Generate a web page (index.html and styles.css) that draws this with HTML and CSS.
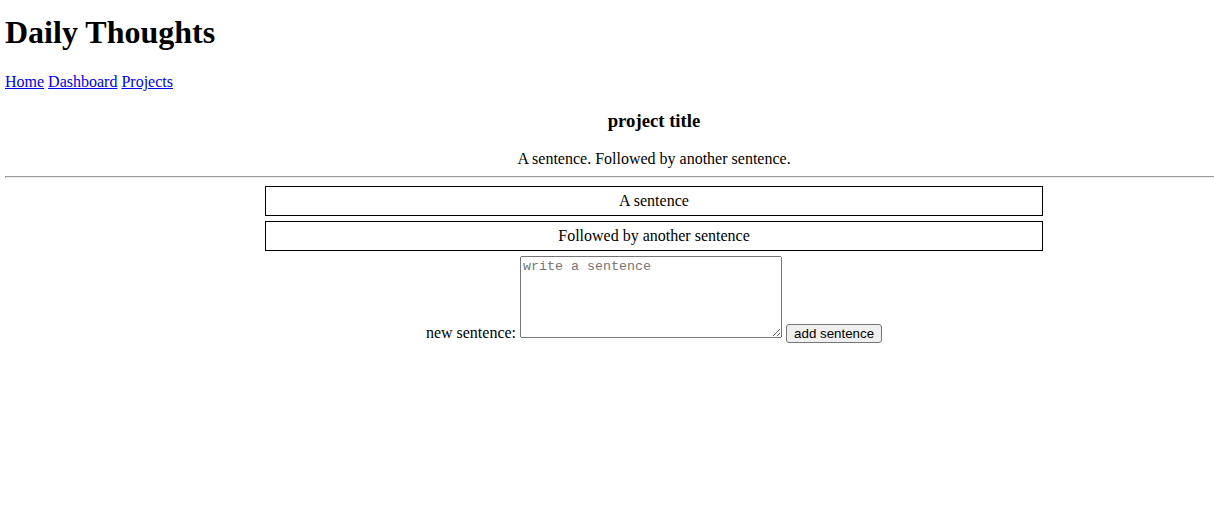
FILE: index.html
```html
<!DOCTYPE html>
<html>
<head>
<meta charset="utf-8">
<title>Daily Thoughts</title>
<link rel="stylesheet" href="styles.css">
</head>
<body>
<div class="page">
  <h1 class="site-title">Daily Thoughts</h1>
  <nav class="nav"><a href="#">Home</a> <a href="#">Dashboard</a> <a href="#">Projects</a></nav>
  <div class="project">
    <h3 class="project-title">project title</h3>
    <p class="project-text">A sentence. Followed by another sentence.</p>
    <hr class="divider">
    <div class="sentence">A sentence</div>
    <div class="sentence">Followed by another sentence</div>
    <form class="new-form">
      <label class="new-label">new sentence:</label> <textarea class="new-input" placeholder="write a sentence"></textarea> <button type="button" class="new-btn">add sentence</button>
    </form>
  </div>
</div>
</body>
</html>
```
FILE: styles.css
```css
html {
  overflow: hidden;
}
body {
  margin: 0 0 0 5px;
  padding-top: 1px;
  overflow: hidden;
  font-family: "Liberation Serif", "Times New Roman", serif;
  font-size: 16px;
  color: #000;
  background: #fff;
}
.page {
  width: 1298px;
}
.site-title {
  font-size: 32px;
  margin: 13px 0 22px;
}
.nav a {
  color: #0000ee;
}
.project {
  text-align: center;
}
.project-title {
  font-size: 18.72px;
  margin: 19px 0 18px;
}
.project-text {
  margin: 16px 0 8px;
}
.divider {
  margin: 8px 0;
}
.sentence {
  width: 60%;
  margin: 5px auto;
  padding: 5px;
  box-sizing: border-box;
  border: 1px solid #000;
}
.new-input {
  width: 256px;
  height: 76px;
  font-family: "Liberation Mono", monospace;
  font-size: 13.33px;
}
.new-btn {
  font-family: "Liberation Sans", Arial, sans-serif;
  font-size: 13.33px;
  padding: 1px 7px;
  border: 1px solid #767676;
  border-radius: 3px;
  background: #efefef;
  color: #000;
}
```
